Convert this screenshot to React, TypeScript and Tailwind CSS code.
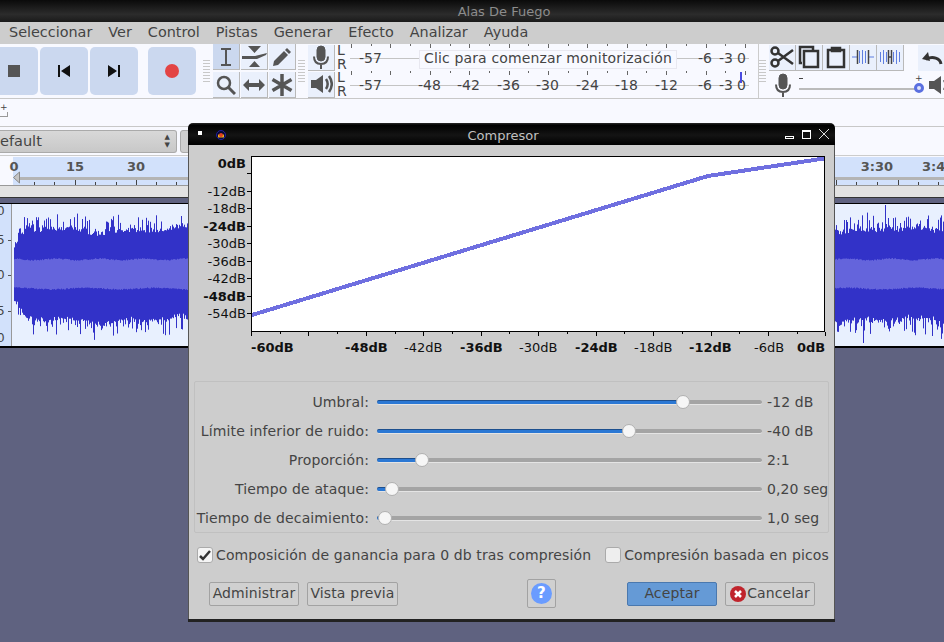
import React from "react";

const menus = ["Seleccionar", "Ver", "Control", "Pistas", "Generar", "Efecto", "Analizar", "Ayuda"];

const sliders = [
  { label: "Umbral:", value: "-12 dB", pos: 306 },
  { label: "Límite inferior de ruido:", value: "-40 dB", pos: 252 },
  { label: "Proporción:", value: "2:1", pos: 45 },
  { label: "Tiempo de ataque:", value: "0,20 seg", pos: 15 },
  { label: "Tiempo de decaimiento:", value: "1,0 seg", pos: 8 },
];

const yLabels = [
  { y: 163, t: "0dB", b: true },
  { y: 191, t: "-12dB" },
  { y: 208, t: "-18dB" },
  { y: 226, t: "-24dB", b: true },
  { y: 243, t: "-30dB" },
  { y: 261, t: "-36dB" },
  { y: 278, t: "-42dB" },
  { y: 296, t: "-48dB", b: true },
  { y: 313, t: "-54dB" },
];

const xLabels = [
  { x: 251, t: "-60dB", b: true },
  { x: 345, t: "-48dB", b: true },
  { x: 404, t: "-42dB" },
  { x: 460, t: "-36dB", b: true },
  { x: 519, t: "-30dB" },
  { x: 575, t: "-24dB", b: true },
  { x: 634, t: "-18dB" },
  { x: 689, t: "-12dB", b: true },
  { x: 754, t: "-6dB" },
  { x: 797, t: "0dB", b: true },
];

const meterScale = [
  { x: 68, t: "-48" },
  { x: 107, t: "-42" },
  { x: 147, t: "-36" },
  { x: 186, t: "-30" },
  { x: 226, t: "-24" },
  { x: 265, t: "-18" },
  { x: 305, t: "-12" },
];

function makeWave() {
  let seed = 12345;
  const rnd = () => {
    seed = (seed * 16807) % 2147483647;
    return seed / 2147483647;
  };
  let dark = "";
  let light = "";
  for (let x = 14; x < 944; x++) {
    const fade = Math.min(1, 0.55 + (x - 14) * 0.04);
    const slow = Math.sin(x / 9) * 1.5 + Math.sin(x / 23) * 2;
    const a = rnd();
    const b = rnd();
    const up = (41 + slow + rnd() * 5 + a * a * a * a * 17) * fade;
    const down = (43 - slow + rnd() * 5 + b * b * b * b * 18) * fade;
    const inUp = 14 + Math.sin(x / 7) * 0.8 + rnd() * 1.2;
    const inDown = 14 - Math.sin(x / 11) * 0.8 + rnd() * 1.2;
    dark += `M${x}.5 ${(70 - up).toFixed(1)}V${(70 + down).toFixed(1)}`;
    light += `M${x}.5 ${(70 - inUp).toFixed(1)}V${(70 + inDown).toFixed(1)}`;
  }
  // the two tall peaks right of the dialog
  dark += "M885.5 1V30M863.5 100V139";
  return { dark, light };
}

const wave = makeWave();

function Grip({ className = "" }: { className?: string }) {
  return (
    <div className={`flex w-[7px] shrink-0 flex-col justify-center gap-[2px] ${className}`}>
      {Array.from({ length: 8 }).map((_, i) => (
        <div key={i} className="h-px bg-[#c8c8c8]" />
      ))}
    </div>
  );
}

function TransportButton({ children, className = "" }: { children: React.ReactNode; className?: string }) {
  return <div className={`flex h-[48px] shrink-0 items-center justify-center bg-[#cbd8ef] ${className}`}>{children}</div>;
}

function ToolButton({ children, active = false }: { children: React.ReactNode; active?: boolean }) {
  return (
    <div
      className={`flex h-[26px] w-[27px] shrink-0 items-center justify-center border-r border-b border-[#b9b9b9] ${
        active ? "bg-[#cbd8ef]" : "bg-[#eaf0fc]"
      }`}
    >
      {children}
    </div>
  );
}

function LR() {
  return (
    <div className="flex w-[13px] flex-col text-[14px] leading-[13.5px] text-[#444]">
      <span>L</span>
      <span>R</span>
    </div>
  );
}

function Meter({ top }: { top: boolean }) {
  const ticks = [];
  for (let x = 1; x < 398; x += 19.7) ticks.push(x);
  return (
    <svg width="399" height="27" className="block shrink-0">
      <path d="M0 14.500H399" stroke="#c4c4c4" />
      {ticks.map((x, i) => (
        <path key={i} d={`M${Math.round(x)}.5 0V${i % 2 ? 2 : 4}`} stroke="#666" />
      ))}
      <g fill="#444" fontSize="14">
        <text x="9" y="19">-57</text>
        {top ? (
          <>
            <rect x="69.500" y="6.500" width="257" height="18" fill="#f8f9ff" stroke="#e8e8f0" />
            <text x="74" y="19" letterSpacing="0.15">Clic para comenzar monitorización</text>
          </>
        ) : (
          meterScale.map((m) => (
            <text key={m.t} x={m.x} y="19">{m.t}</text>
          ))
        )}
        <text x="348" y="19">-6</text>
        <text x="369" y="19">-3</text>
        <text x="387" y="19">0</text>
      </g>
      {!top && <path d="M391 1V12" stroke="#4a4ae0" strokeWidth="2" />}
    </svg>
  );
}

function MicIcon({ size = 24 }: { size?: number }) {
  return (
    <svg width={size} height={size} viewBox="0 0 24 24" fill="none" stroke="#555">
      <rect x="8" y="1" width="8" height="15" rx="4" fill="#555" />
      <path d="M5 11.500c0 5 3 7.500 7 7.500s7-2.500 7-7.500M12 19v5" strokeWidth="2" />
    </svg>
  );
}

function SpeakerIcon() {
  return (
    <svg width="24" height="24" viewBox="0 0 24 24" fill="#555">
      <path d="M2 8h5l7-5v18l-7-5H2z" />
      <path d="M17 7c2 3 2 7 0 10M20 4c3.500 5 3.500 11 0 16" fill="none" stroke="#555" strokeWidth="2.500" />
    </svg>
  );
}

function WaveGlyph({ flip = false }: { flip?: boolean }) {
  return (
    <svg width="22" height="16" viewBox="0 0 22 16" fill="none" stroke="#5f7fe0">
      {flip ? (
        <>
          <path d="M1.500 3v10M4.500 1v14M7.500 3v10M14.500 3v10M17.500 1v14M20.500 3v10" />
          <path d="M9.500 1v14M12.500 1v14M9 8h4" stroke="#444" strokeWidth="1.500" />
        </>
      ) : (
        <>
          <path d="M0 8h5M17 8h5M7.500 2v12M10.500 1v14M13.500 2v12" />
          <path d="M5.500 1v14M16.500 1v14" stroke="#444" strokeWidth="1.500" />
        </>
      )}
    </svg>
  );
}

function Slider({ label, value, pos }: { label: string; value: string; pos: number }) {
  return (
    <div className="flex h-[29px] items-center">
      <div className="w-[174px] shrink-0 whitespace-nowrap text-right text-[14px] tracking-[0.12px] text-[#444]">{label}</div>
      <div className="relative ml-[8px] h-[5px] w-[385px] shrink-0 rounded-full border-b border-[#e4e4e4] bg-[#a4a4a4]">
        <div className="h-[4px] rounded-full border-t border-[#1d4f8e] bg-[#2b78d4]" style={{ width: pos }} />
        <div
          className="absolute top-[-5px] h-[14px] w-[14px] rounded-full border border-[#b0b0b0] bg-[#f6f6f6]"
          style={{ left: pos - 7 }}
        />
      </div>
      <div className="ml-[5px] whitespace-nowrap text-[14px] tracking-[0.12px] text-[#444]">{value}</div>
    </div>
  );
}

function DialogButton({
  children,
  className = "",
  tone = "border-[#a2a2a2] bg-[#d0d0d0]",
}: {
  children: React.ReactNode;
  className?: string;
  tone?: string;
}) {
  return (
    <div className={`flex shrink-0 items-center justify-center rounded-[2px] border text-[14px] tracking-[0.12px] text-[#444] ${tone} ${className}`}>
      {children}
    </div>
  );
}

function CompressorChart() {
  return (
    <svg width="645" height="225" className="block" fontSize="13">
      <rect x="62.500" y="11.500" width="573" height="175" fill="#fff" stroke="#000" />
      <path d="M63 170 L519 31 L635 13.500" fill="none" stroke="#6f6fe0" strokeWidth="4" shapeRendering="crispEdges" />
      {yLabels.map((l) => (
        <text key={l.t} x="57" y={l.y - 145 + 5} textAnchor="end" fill="#111" fontWeight={l.b ? 700 : 400}>
          {l.t}
        </text>
      ))}
      {[28, 46, 63, 81, 98, 116, 133, 151, 168].map((y) => (
        <path key={y} d={`M58 ${y}.5H62`} stroke="#000" />
      ))}
      {xLabels.map((l) => (
        <text key={l.t} x={l.x - 189} y="207" fill="#111" fontWeight={l.b ? 700 : 400}>
          {l.t}
        </text>
      ))}
      {Array.from({ length: 21 }).map((_, i) => (
        <path key={i} d={`M${Math.round(62 + i * 28.72)}.5 187V${i % 2 ? 189 : 191}`} stroke="#000" />
      ))}
    </svg>
  );
}

export default function App() {
  return (
    <div className="relative h-[642px] w-[944px] overflow-hidden bg-[#5f6280] font-['DejaVu_Sans',sans-serif]">
      <div className="flex h-[22px] items-center justify-center bg-[linear-gradient(to_bottom,#0a0a0a,#2c2c2c_65%,#1a1a1a)] pl-[64px] pt-[1px] text-[13px] text-[#8c8c8c]">
        Alas De Fuego
      </div>

      <div className="flex h-[22px] items-center gap-[16px] bg-[#cdcdcd] pl-[9px] text-[14.400px] text-[#444]">
        {menus.map((m) => (
          <span key={m}>{m}</span>
        ))}
      </div>

      <div className="flex h-[55px] items-stretch border-b border-[#c8c8c8] bg-[#f8f9ff]">
        <div className="flex shrink-0 items-center">
          <TransportButton className="w-[38px] rounded-r-[5px] pr-[10px]">
            <div className="h-[12px] w-[12px] bg-[#555]" />
          </TransportButton>
          <TransportButton className="ml-[2px] w-[48px] rounded-[5px]">
            <svg width="14" height="14" viewBox="0 0 14 14" fill="#111">
              <path d="M1 1h2v12H1zM13 1v12L4 7z" />
            </svg>
          </TransportButton>
          <TransportButton className="ml-[2px] w-[48px] rounded-[5px]">
            <svg width="14" height="14" viewBox="0 0 14 14" fill="#111">
              <path d="M11 1h2v12h-2zM1 1v12l9-6z" />
            </svg>
          </TransportButton>
          <TransportButton className="ml-[10px] w-[48px] rounded-[5px]">
            <div className="h-[14px] w-[14px] rounded-full bg-[#e34444]" />
          </TransportButton>
        </div>
        <Grip className="ml-[7px]" />
        <div className="ml-[3px] grid h-[54px] w-[83px] shrink-0 grid-cols-3 content-start gap-x-px gap-y-[2px]">
          <ToolButton active>
            <svg width="12" height="18" viewBox="0 0 12 18" fill="none" stroke="#555" strokeWidth="2">
              <path d="M1 1h10M6 1v16M1 17h10" />
            </svg>
          </ToolButton>
          <ToolButton>
            <svg width="25" height="24" viewBox="0 0 25 24" fill="#555">
              <path d="M6 1h13l-6.500 7zM0 11h13l12-3-1 2-9 4H0zM7 22l5.500-6 5.500 6z" />
            </svg>
          </ToolButton>
          <ToolButton>
            <svg width="20" height="20" viewBox="0 0 20 20" fill="#555">
              <path d="M15 1l4 4-2 2-4-4zM12 4l4 4L6 18l-5 1 1-5z" />
            </svg>
          </ToolButton>
          <ToolButton>
            <svg width="20" height="20" viewBox="0 0 20 20" fill="none" stroke="#555">
              <circle cx="8" cy="8" r="6" strokeWidth="2.500" />
              <path d="M12.500 12.500L19 19" strokeWidth="3" />
            </svg>
          </ToolButton>
          <ToolButton>
            <svg width="22" height="12" viewBox="0 0 22 12" fill="#555">
              <path d="M0 6l6-6v4h10V0l6 6-6 6V8H6v4z" />
            </svg>
          </ToolButton>
          <ToolButton>
            <svg width="22" height="22" viewBox="0 0 22 22" stroke="#555" strokeWidth="3.500">
              <path d="M11 0v22M1.500 5.500l19 11M20.500 5.500l-19 11" />
            </svg>
          </ToolButton>
        </div>
        <Grip className="ml-[2px]" />
        <div className="ml-[3px] flex w-[442px] shrink-0 flex-col">
          <div className="flex h-[27px] items-center">
            <ToolButton>
              <MicIcon />
            </ToolButton>
            <div className="ml-[2px]"><LR /></div>
            <Meter top />
          </div>
          <div className="flex h-[27px] items-center">
            <ToolButton>
              <SpeakerIcon />
            </ToolButton>
            <div className="ml-[2px]"><LR /></div>
            <Meter top={false} />
          </div>
        </div>
        <Grip className="ml-[8px] w-[8px] border-l border-[#ccc]" />
        <div className="ml-[3px] flex shrink-0 flex-col">
          <div className="flex h-[27px] items-center">
            <ToolButton>
              <svg width="24" height="24" viewBox="0 0 24 24" fill="none" stroke="#333" strokeWidth="2.500">
                <circle cx="5" cy="6" r="3.500" />
                <circle cx="5" cy="18" r="3.500" />
                <path d="M8 8l15 11M8 16L23 5" />
              </svg>
            </ToolButton>
            <ToolButton>
              <svg width="22" height="24" viewBox="0 0 22 24" fill="none" stroke="#333" strokeWidth="2.500">
                <path d="M4 18H2V2h13v3" />
                <rect x="6" y="6" width="14" height="16" />
              </svg>
            </ToolButton>
            <ToolButton>
              <svg width="22" height="24" viewBox="0 0 22 24" fill="none" stroke="#333" strokeWidth="2.500">
                <rect x="3" y="5" width="16" height="17" />
                <path d="M7 6V3h8v3z" fill="#333" />
              </svg>
            </ToolButton>
            <ToolButton><WaveGlyph /></ToolButton>
            <ToolButton><WaveGlyph flip /></ToolButton>
            <div className="ml-[14px] flex h-[26px] w-[27px] shrink-0 items-center justify-center bg-[#eaf0fc]">
              <svg width="22" height="14" viewBox="0 0 22 14" fill="none" stroke="#333" strokeWidth="3">
                <path d="M20 13c-1-6-8-8-15-5" />
                <path d="M7 1L1 8l8 2z" fill="#333" strokeWidth="0" />
              </svg>
            </div>
          </div>
          <div className="flex h-[27px] items-center">
            <div className="flex w-[27px] shrink-0 justify-center">
              <MicIcon />
            </div>
            <div className="relative ml-[3px] h-[27px] w-[120px] shrink-0">
              <span className="absolute left-0 top-[7px] h-px w-[4px] bg-[#444]" />
              <span className="absolute left-[116px] top-[3px] text-[9px] leading-[9px] text-[#444]">+</span>
              <div className="absolute left-0 top-[17px] h-[2px] w-[118px] bg-[#bbb]" />
              <div className="absolute left-[115px] top-[12px] h-[10px] w-[10px] rounded-full border-[3px] border-[#5a6fe0] bg-[#dfe4fb]" />
            </div>
            <div className="ml-[8px] shrink-0"><SpeakerIcon /></div>
          </div>
        </div>
      </div>

      <div className="h-[28px] border-b border-[#c8c8c8] bg-[#f8f9ff] pt-[4px]">
        <div className="text-[9px] leading-[9px] text-[#444]">+</div>
        <div className="h-[5px] w-[8px] border-r border-b border-[#999]" />
      </div>

      <div className="flex h-[28px] items-center gap-[3px] bg-[#f8f9ff]">
        <div className="flex h-[23px] w-[177px] shrink-0 items-center justify-between rounded-r-[3px] border border-l-0 border-[#aaa] bg-[linear-gradient(to_bottom,#d8d8d8,#c8c8c8)] pr-[6px] text-[14.500px] text-[#444]">
          <span className="mt-[2px]">efault</span>
          <span className="flex flex-col text-[7px] leading-[8px]">
            <span>▲</span>
            <span>▼</span>
          </span>
        </div>
        <div className="h-[23px] w-[60px] rounded-[3px] border border-[#aaa] bg-[#cfcfcf]" />
      </div>

      <svg width="944" height="30" className="block bg-[#f8f9ff]">
        <rect x="13" y="2" width="931" height="28" fill="#d2e1fb" />
        <path d="M0 0.500H944" stroke="#ccc" />
        <path d="M0 30.500H944" stroke="#555" />
        <rect x="19" y="22" width="925" height="3" fill="#b4b4b4" />
        <path d="M13.500 22.500L19.500 17V28z" fill="#c4c4c4" stroke="#888" />
        <g fill="#555" fontSize="13" fontWeight="700" textAnchor="middle">
          <text x="14" y="16">0</text>
          <text x="75" y="16">15</text>
          <text x="136" y="16">30</text>
          <text x="877" y="16">3:30</text>
          <text x="922" y="16" textAnchor="start">3:4</text>
        </g>
        {[34, 54, 75, 95, 116, 136, 156, 176, 836, 856, 877, 898, 918, 938].map((x, i) => (
          <path key={x} d={`M${x}.5 ${i % 3 === 2 ? 25 : 27}V30`} stroke="#444" />
        ))}
      </svg>

      <div className="h-[12px] border-t border-[#999] bg-[#e2e2e2]" />
      <div className="h-[6px] border-t border-[#333] bg-[#5f6280]" />

      <div className="flex h-[145px] border-t border-b-2 border-black bg-[#e8f0fe]">
        <div className="relative w-[12px] shrink-0 overflow-hidden border-r border-[#999] bg-[#d2e1fb] text-[12px] leading-[12px] text-[#444]">
          <span className="absolute left-[-3px] top-[1px]">0</span>
          <span className="absolute left-[-3px] top-[30px]">5</span>
          <span className="absolute left-[-3px] top-[65px]">0</span>
          <span className="absolute left-[-3px] top-[101px]">5</span>
          <span className="absolute left-[-3px] top-[128px]">0</span>
          <span className="absolute left-[8px] top-[36px] h-px w-[3px] bg-[#555]" />
          <span className="absolute left-[8px] top-[71px] h-px w-[3px] bg-[#555]" />
          <span className="absolute left-[8px] top-[107px] h-px w-[3px] bg-[#555]" />
        </div>
        <svg width="932" height="142" viewBox="12 0 932 142" className="block shrink-0">
          <path d={wave.dark} stroke="#3232c8" />
          <path d={wave.light} stroke="#6464dc" />
        </svg>
      </div>

      <div className="absolute left-[188px] top-[123px] flex h-[499px] w-[647px] flex-col overflow-hidden rounded-t-[5px] border-b-[3px] border-[#222] bg-[#cdcdcd]">
        <div className="relative flex h-[22px] shrink-0 items-center justify-center bg-[linear-gradient(to_bottom,#2a2a2a,#000_10%,#141414_55%,#000)] pr-[17px] pt-[3px] text-[13px] text-[#c0c0c0]">
          <span className="absolute left-[10px] top-[8px] h-[4px] w-[4px] bg-white" />
          <svg width="10" height="10" viewBox="0 0 10 10" className="absolute left-[28px] top-[7px]">
            <circle cx="5" cy="5" r="4.500" fill="#080830" stroke="#2020a0" />
            <path d="M2 6h6" stroke="#e8b020" strokeWidth="3" />
            <circle cx="5" cy="5" r="2" fill="#e04020" />
          </svg>
          Compresor
          <div className="absolute right-[6px] top-0 flex h-[22px] items-center gap-[8px]">
            <span className="mt-[7px] h-[3px] w-[9px] border border-white" />
            <span className="h-[9px] w-[9px] border border-t-2 border-white" />
            <svg width="10" height="10" viewBox="0 0 10 10" stroke="#ddd">
              <path d="M0 0l10 10M10 0L0 10" />
            </svg>
          </div>
        </div>

        <div className="flex-1 border-x border-[#555]">
          <CompressorChart />

          <div className="mx-[5px] mt-[11px] h-[152px] w-[635px] rounded-[2px] border border-[#c0c0c0] pt-[6px]">
            {sliders.map((s) => (
              <Slider key={s.label} {...s} />
            ))}
          </div>

          <div className="mt-[12px] flex h-[20px] items-center text-[14px] tracking-[0.12px] text-[#444]">
            <div className="ml-[8px] flex h-[16px] w-[16px] shrink-0 items-center justify-center rounded-[3px] border border-[#aaa] bg-[#f4f4f4]">
              <svg width="12" height="11" viewBox="0 0 12 11" fill="none" stroke="#333" strokeWidth="2.500">
                <path d="M1 6l3 3 7-8" />
              </svg>
            </div>
            <span className="ml-[3px] whitespace-nowrap">Composición de ganancia para 0 db tras compresión</span>
            <div className="ml-[14px] h-[16px] w-[16px] shrink-0 rounded-[3px] border border-[#aaa] bg-[#eee]" />
            <span className="ml-[3px] whitespace-nowrap">Compresión basada en picos</span>
          </div>

          <div className="mt-[14px] flex items-center pl-[20px]">
            <DialogButton className="h-[24px] w-[90px]">Administrar</DialogButton>
            <DialogButton className="ml-[8px] h-[24px] w-[91px]">Vista previa</DialogButton>
            <DialogButton className="ml-[129px] h-[29px] w-[29px]">
              <span className="flex h-[21px] w-[21px] items-center justify-center rounded-full bg-[#6a9cff] text-[15px] font-bold text-white">?</span>
            </DialogButton>
            <DialogButton className="ml-[71px] h-[24px] w-[90px]" tone="border-[#4a78ae] bg-[#659ad6]">Aceptar</DialogButton>
            <DialogButton className="ml-[8px] h-[24px] w-[90px] gap-[1px]">
              <svg width="16" height="16" viewBox="0 0 16 16" className="shrink-0">
                <circle cx="8" cy="8" r="8" fill="#c0242c" />
                <path d="M5 5l6 6M11 5l-6 6" stroke="#fff" strokeWidth="2.500" />
              </svg>
              Cancelar
            </DialogButton>
          </div>
        </div>
      </div>
    </div>
  );
}
